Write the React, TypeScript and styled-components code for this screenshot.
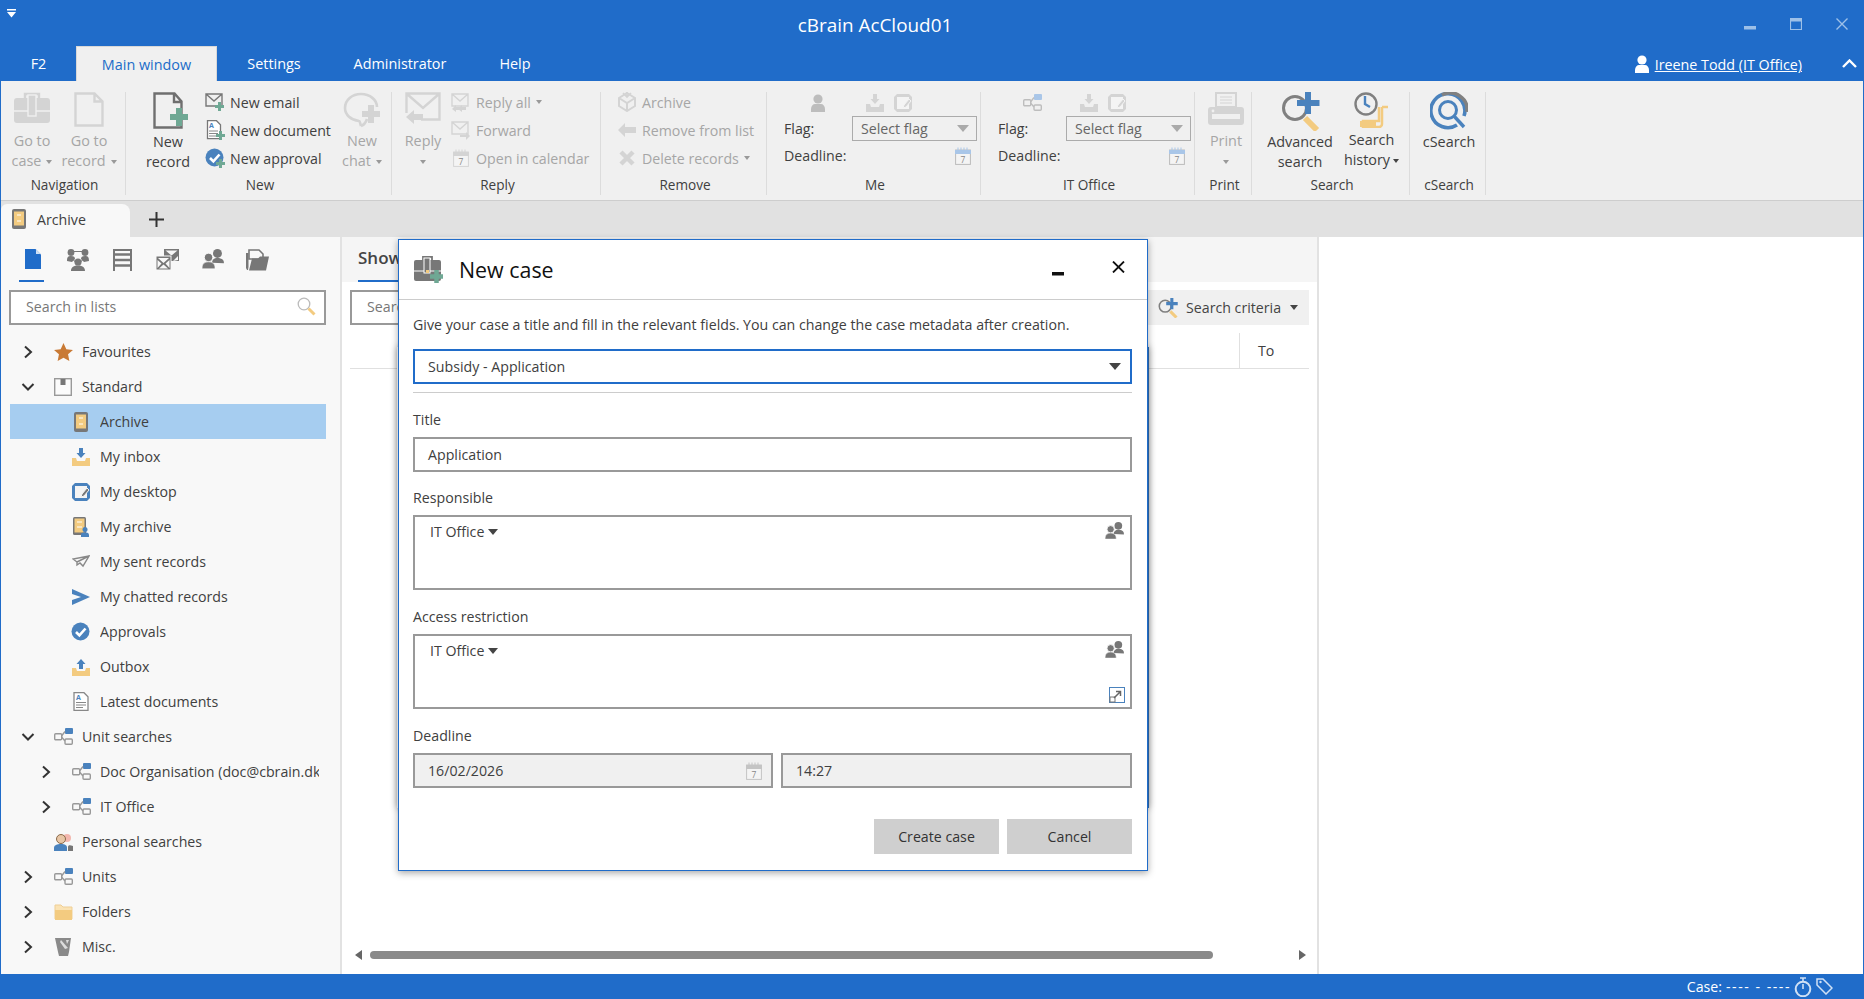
import React from 'react';
import styled, { createGlobalStyle } from 'styled-components';

const BLUE = '#206cc9';
const ICON_BLUE = '#4a82bd';
const YELLOW = '#f3cb80';
const DIS = '#d4d4d4';
const TEXT = '#404040';
const DIS_TEXT = '#a6a6a6';
const GREEN = '#6fa894';

const Global = createGlobalStyle`
  html, body { margin: 0; padding: 0; width: 1864px; height: 999px; overflow: hidden; background: #fff; }
  body { font-family: "Open Sans", "Noto Sans", sans-serif; font-size: 14.2px; color: ${TEXT}; }
  #root { width: 1864px; height: 999px; }
  * { box-sizing: border-box; }
  svg { display: block; flex: none; }
`;

const Win = styled.div`
  position: relative; width: 1864px; height: 999px; display: flex; flex-direction: column;
  border-left: 1px solid ${BLUE}; border-right: 1px solid ${BLUE}; overflow: hidden;
`;
const TitleBar = styled.div`
  height: 46px; background: ${BLUE}; display: grid; grid-template-columns: 1fr auto 1fr; align-items: center; color: #fff;
`;
const QuickAccess = styled.div`padding: 0 0 20px 6px;`;
const AppTitle = styled.div`font-size: 18.9px; padding-top: 4px; transform: translateX(-57px);`;
const WinControls = styled.div`display: flex; justify-content: flex-end; align-items: flex-start; gap: 34px; padding: 18px 15px 0 0; height: 100%;`;
const MenuBar = styled.div`height: 35px; background: ${BLUE}; display: flex; align-items: stretch;`;
const MenuTab = styled.div<{ $w: number; $active?: boolean }>`
  width: ${p => p.$w}px; display: flex; align-items: center; justify-content: center; font-size: 14.4px;
  color: ${p => (p.$active ? BLUE : '#fff')};
  background: ${p => (p.$active ? '#f0f0f0' : 'transparent')};
  ${p => p.$active && 'border: 1px solid #d8d8d8; border-bottom: none;'}
`;
const UserArea = styled.div`margin-left: auto; display: flex; align-items: center; color: #fff; font-size: 14.3px;`;
const UserName = styled.span`text-decoration: underline; margin-left: 6px; padding-top: 2px;`;
const Collapse = styled.div`margin: 0 6px 0 40px;`;

const Ribbon = styled.div`
  height: 120px; background: #f0f0f0; border-bottom: 1px solid #cdcdcd; display: flex; padding: 11px 0 5px;
`;
const Group = styled.div<{ $w: number }>`
  width: ${p => p.$w}px; border-right: 1px solid #dcdcdc; display: flex; flex-direction: column;
`;
const GroupBody = styled.div<{ $pad?: number }>`
  flex: 1; display: flex; align-items: flex-start; padding-left: ${p => p.$pad ?? 0}px; min-height: 0;
`;
const GroupLabel = styled.div`height: 20px; line-height: 20px; text-align: center; padding-left: 3px; color: ${TEXT}; font-size: 13.6px; flex: none; margin-top: -2px;`;
const LargeBtn = styled.div<{ $w: number; $off?: boolean; $push?: boolean }>`
  width: ${p => p.$w}px; display: flex; flex-direction: column; align-items: center;
  color: ${p => (p.$off ? DIS_TEXT : TEXT)}; line-height: 20px; font-size: 14.4px; text-align: center;
  ${p => p.$push && 'margin-left: auto;'}
`;
const LargeIcon = styled.div<{ $h?: number; $ox?: number }>`
  height: ${p => p.$h ?? 40}px; padding-left: ${p => p.$ox ?? 0}px; display: flex; align-items: flex-start; justify-content: center;
`;
const Caret = styled.span<{ $off?: boolean; $m?: number }>`
  display: inline-block; width: 0; height: 0; border: 3px solid transparent; border-bottom: none; border-top: 4px solid ${p => (p.$off ? '#999' : '#444')};
  margin-left: ${p => p.$m ?? 5}px; vertical-align: middle;
`;
const SmallCol = styled.div<{ $ml?: number }>`display: flex; flex-direction: column; margin-top: -4px; margin-left: ${p => p.$ml ?? 0}px;`;
const SmallBtn = styled.div<{ $off?: boolean }>`
  height: 28px; display: flex; align-items: center; white-space: nowrap; color: ${p => (p.$off ? DIS_TEXT : TEXT)}; font-size: 14.2px;
`;
const SmallIcon = styled.div<{ $w?: number }>`width: ${p => p.$w ?? 20}px; margin-right: 5px; display: flex; justify-content: center;`;
const FlagGrid = styled.div`
  display: grid; grid-template-columns: 68px 125px; grid-template-rows: 24px 25px 29px; padding-left: 17px; align-items: center; font-size: 14.2px;
`;
const CenterCell = styled.div`display: flex; justify-content: center; align-self: start; padding-top: 2px;`;
const IconPair = styled.div`display: flex; gap: 10px; padding-left: 14px; align-self: start; padding-top: 2px;`;
const FlagSelect = styled.div`
  height: 25px; border: 1px solid #ababab; display: flex; align-items: center; justify-content: space-between; padding: 0 7px 0 8px; color: #666;
`;
const DownTri = styled.span<{ $c?: string; $w?: number; $h?: number }>`
  display: inline-block; width: 0; height: 0; border-left: ${p => p.$w ?? 6}px solid transparent; border-right: ${p => p.$w ?? 6}px solid transparent;
  border-top: ${p => p.$h ?? 7}px solid ${p => p.$c ?? '#444'};
`;
const CalCell = styled.div`display: flex; justify-content: flex-end; padding-right: 6px;`;

const TabStrip = styled.div`height: 36px; background: #e1e1e1; display: flex; align-items: flex-end; position: relative;`;
const DocTab = styled.div`
  width: 129px; height: 33px; background: #f8f8f8; border-radius: 6px 8px 0 0; display: flex; align-items: center; padding: 0 0 3px 11px; gap: 11px;
`;
const AddTab = styled.div`margin: 0 0 10px 19px;`;

const Body = styled.div`flex: 1; min-height: 0; display: flex;`;
const Sidebar = styled.div`width: 341px; background: #f8f8f8; border-right: 2px solid #e2e2e2; display: flex; flex-direction: column; flex: none;`;
const NavRow = styled.div`height: 45px; display: flex; padding-left: 9px; flex: none;`;
const NavCell = styled.div<{ $active?: boolean }>`
  width: 45px; display: flex; align-items: flex-start; justify-content: center; padding-top: 12px; position: relative;
  ${p => p.$active && `&::after { content: ''; position: absolute; left: 9px; width: 25px; bottom: 0; height: 2px; background: ${BLUE}; }`}
`;
const SearchBox = styled.div`
  margin: 8px 0 0 8px; width: 317px; height: 35px; border: 2px solid #999; background: #fff; display: flex; align-items: center; justify-content: space-between;
  padding: 0 8px 2px 15px; color: #777; flex: none;
`;
const Tree = styled.div`margin-top: 9px; display: flex; flex-direction: column;`;
const Row = styled.div<{ $lvl: number; $sel?: boolean }>`
  height: 35px; margin-left: 9px; width: 316px; display: flex; align-items: center; padding-left: ${p => p.$lvl * 18}px; padding-right: 7px;
  background: ${p => (p.$sel ? '#a6cdf0' : 'transparent')}; color: ${TEXT};
`;
const Chev = styled.div`width: 36px; display: flex; justify-content: center; flex: none;`;
const RowIcon = styled.div`width: 20px; margin-left: 7px; margin-right: 9px; display: flex; justify-content: center; flex: none;`;
const RowText = styled.div`white-space: nowrap; overflow: hidden; flex: 1; min-width: 0;`;

const Main = styled.div`width: 977px; border-right: 2px solid #e2e2e2; display: flex; flex-direction: column; flex: none; background: #fff;`;
const MainHead = styled.div`height: 45px; background: #f5f5f5; padding-left: 16px; flex: none;`;
const ShowTab = styled.div`display: inline-block; height: 45px; line-height: 42px; border-bottom: 2px solid ${BLUE}; font-size: 17px; font-weight: 600; color: #444; width: 240px;`;
const ToolRow = styled.div`display: flex; margin: 8px 8px 0 8px; height: 35px; gap: 40px; flex: none;`;
const MainSearch = styled.div`flex: 1; border: 2px solid #999; padding: 0 15px 2px; display: flex; align-items: center; color: #777;`;
const CriteriaBtn = styled.div`width: 180px; background: #f0f0f0; display: flex; align-items: center; padding-left: 29px; white-space: nowrap; color: #444;`;
const CriteriaText = styled.span`margin: 0 9px 0 8px;`;
const TableHead = styled.div`margin: 8px 8px 0 8px; height: 36px; border-bottom: 1px solid #e0e0e0; display: flex; justify-content: flex-end; flex: none;`;
const HeadCell = styled.div`width: 70px; border-left: 1px solid #e0e0e0; padding-left: 18px; line-height: 36px;`;
const MainFill = styled.div`flex: 1;`;
const HScroll = styled.div`height: 19px; margin-bottom: 10px; display: flex; align-items: center; padding-left: 13px; flex: none;`;
const Thumb = styled.div`width: 843px; height: 8px; border-radius: 4px; background: #8a8a8a; margin: 0 86px 0 8px;`;
const ScrollArrow = styled.span<{ $left?: boolean }>`
  width: 0; height: 0; border-top: 5px solid transparent; border-bottom: 5px solid transparent;
  ${p => (p.$left ? 'border-right: 7px solid #666;' : 'border-left: 7px solid #666;')}
`;
const RightPane = styled.div`flex: 1; background: #fff;`;
const StatusBar = styled.div`height: 25px; background: ${BLUE}; color: #fff; display: flex; align-items: center; justify-content: flex-end; padding-right: 30px; flex: none;`;
const Dashes = styled.span`letter-spacing: 1.5px; margin-left: 4px;`;
const StatusIcons = styled.div`display: flex; gap: 4px; margin-left: 3px;`;

const UnderDialog = styled.div`
  position: absolute; left: 396px; top: 347px; width: 752px; height: 461px; background: #fff; border-right: 2px solid #2f6db5;
  box-shadow: 0 0 7px rgba(0,0,0,.35);
`;
const Dialog = styled.div`
  position: absolute; left: 397px; top: 239px; width: 750px; height: 632px; background: #fff; border: 1px solid ${BLUE};
  box-shadow: 0 2px 7px rgba(0,0,0,.35); display: flex; flex-direction: column;
`;
const DlgHead = styled.div`height: 60px; border-bottom: 1px solid #ccc; display: flex; align-items: center; padding: 0 22px 0 15px; flex: none;`;
const DlgTitle = styled.div`font-size: 21.4px; color: #111; margin-left: 15px; flex: 1;`;
const DlgClose = styled.div`margin-left: 48px; margin-top: -6px;`;
const DlgBody = styled.div`padding: 15px 15px 0 14px; display: flex; flex-direction: column; flex: 1;`;
const Desc = styled.div`line-height: 20px; white-space: nowrap;`;
const TypeSelect = styled.div`
  margin-top: 14px; height: 35px; border: 2px solid ${BLUE}; display: flex; align-items: center; justify-content: space-between; padding: 0 9px 0 13px;
`;
const Rule = styled.div`margin-top: 8px; height: 1px; background: #ccc; flex: none;`;
const Field = styled.div<{ $mt?: number }>`margin-top: ${p => p.$mt ?? 16}px;`;
const Label = styled.div`line-height: 20px; margin-bottom: 7px;`;
const TextBox = styled.div`height: 35px; border: 2px solid #999; display: flex; align-items: center; padding-left: 13px;`;
const AreaBox = styled.div`height: 75px; border: 2px solid #999; padding: 5px 0 0 15px; position: relative; line-height: 20px;`;
const Pick = styled.div`display: flex; align-items: center; gap: 4px;`;
const BoxPeople = styled.div`position: absolute; top: 5px; right: 6px;`;
const BoxExpand = styled.div`position: absolute; bottom: 4px; right: 5px;`;
const DateRow = styled.div`display: flex; gap: 8px;`;
const DateBox = styled.div<{ $w?: number }>`
  ${p => (p.$w ? `width: ${p.$w}px;` : 'flex: 1;')} height: 35px; border: 2px solid #999; background: #f0f0f0; display: flex; align-items: center; justify-content: space-between; padding: 0 9px 0 13px;
`;
const DlgFoot = styled.div`display: flex; justify-content: flex-end; gap: 8px; margin-top: 31px;`;
const DlgBtn = styled.div`width: 125px; height: 35px; background: #cfcfcf; display: flex; align-items: center; justify-content: center; color: #333;`;

/* ---------- drawings ---------- */
const Plus = ({ x, y, s, t, c = GREEN }: { x: number; y: number; s: number; t: number; c?: string }) => (
  <path fill={c} d={`M${x + (s - t) / 2} ${y}h${t}v${(s - t) / 2}h${(s - t) / 2}v${t}h${-(s - t) / 2}v${(s - t) / 2}h${-t}v${-(s - t) / 2}h${-(s - t) / 2}v${-t}h${(s - t) / 2}z`} />
);
const Briefcase = ({ c }: { c: string }) => (
  <svg width="36" height="31" viewBox="0 0 36 31">
    <path d="M11 7V2h14v5" fill="none" stroke={c} strokeWidth="2.4" />
    <rect x="0" y="6" width="36" height="25" rx="3" fill={c} />
    <path d="M0 19h36" stroke="#f0f0f0" strokeWidth="1.5" />
    <rect x="14" y="3" width="8" height="21" fill={c} stroke="#f0f0f0" strokeWidth="1.4" />
  </svg>
);
const PageIcon = ({ c }: { c: string }) => (
  <svg width="30" height="35" viewBox="0 0 30 35">
    <path d="M1.5 1.5h19l8 8v24h-27z M20.5 1.5v8h8" fill="none" stroke={c} strokeWidth="2.4" />
  </svg>
);
const NewRecordIcon = () => (
  <svg width="36" height="38" viewBox="0 0 36 38">
    <path d="M1.5 1.5h20l7 8v26h-27z M21 2v8h7" fill="#f0f0f0" stroke="#6f6f6f" strokeWidth="2.4" />
    <Plus x={17} y={16} s={18} t={6} />
  </svg>
);
const ChatIcon = () => (
  <svg width="38" height="38" viewBox="0 0 38 38">
    <path d="M18 34c-1-3-1-5-2-5C8 28 2 23 2 16 2 8 9 2 18 2s16 6 16 13" fill="none" stroke={DIS} strokeWidth="2.6" />
    <path d="M24 27c-1 3-3 6-6 7" fill="none" stroke={DIS} strokeWidth="2.6" />
    <Plus x={19} y={13} s={18} t={6} c={DIS} />
  </svg>
);
const ReplyIcon = () => (
  <svg width="36" height="34" viewBox="0 0 36 34">
    <path d="M1.5 21V1.5h33v26H16 M2 2l16 14L34 2" fill="none" stroke={DIS} strokeWidth="2.4" />
    <path d="M1 25l8-7v4h9v6H9v4z" fill={DIS} />
  </svg>
);
const Mail = ({ c, plus, arrow, dbl }: { c: string; plus?: boolean; arrow?: boolean; dbl?: boolean }) => (
  <svg width="20" height="19" viewBox="0 0 20 19">
    <path d="M1 1h16v12H1z M1 1l8 7 8-7" fill="none" stroke={c} strokeWidth="1.4" />
    {plus && <Plus x={10} y={9} s={9} t={3} />}
    {arrow && <path d="M9 14h6v-3l4 4-4 4v-3H9z" fill={c} />}
    {dbl && <path d="M1 16l4-4v2h6v3H5v2z M7 16l4-4v2h4v3h-4v2z" fill={c} />}
  </svg>
);
const DocPlus = () => (
  <svg width="19" height="20" viewBox="0 0 19 20">
    <path d="M1.5.7h9l4 4v14h-13z" fill="#fff" stroke="#777" strokeWidth="1.3" />
    <text x="3" y="8" fontSize="7" fontFamily="Open Sans" fontWeight="700" fill={ICON_BLUE}>A</text>
    <path d="M3 11h9M3 13.5h9M3 16h7" stroke="#888" />
    <Plus x={10} y={11} s={9} t={3} />
  </svg>
);
const Check = ({ s, plus }: { s: number; plus?: boolean }) => (
  <svg width={s} height={s} viewBox="0 0 20 20">
    <circle cx="9.5" cy="9.5" r="9" fill={ICON_BLUE} />
    <path d="M5 10l3.4 3.4L14.5 6.5" fill="none" stroke="#fff" strokeWidth="2.6" />
    {plus && <Plus x={11} y={11} s={9} t={3} />}
  </svg>
);
const Calendar = ({ c = '#c4c4c4', top = '#c4c4c4', w = 16, h = 18 }: { c?: string; top?: string; w?: number; h?: number }) => (
  <svg width={w} height={h} viewBox="0 0 16 18">
    <rect x=".6" y="3" width="14.8" height="14.4" fill="#f4f4f4" stroke={c} />
    <rect x="0" y="3" width="16" height="4" fill={top} />
    <path d="M3 .5v3M6 .5v3M9 .5v3M12 .5v3" stroke={top} />
    <text x="8" y="15.5" textAnchor="middle" fontSize="8.5" fontFamily="Open Sans" fill="#888">7</text>
  </svg>
);
const ArchiveBox = ({ c = DIS }: { c?: string }) => (
  <svg width="18" height="20" viewBox="0 0 18 20">
    <path d="M9 1l8 5v8l-8 5-8-5V6z M1 6l8 5 8-5 M9 11v8" fill="none" stroke={c} strokeWidth="2" />
    <path d="M9 0v5M5 1l4 4 4-4" fill="none" stroke={c} strokeWidth="1.6" />
  </svg>
);
const BackArrow = () => (
  <svg width="18" height="14" viewBox="0 0 18 14"><path d="M0 7l7-7v4h11v6H7v4z" fill={DIS} /></svg>
);
const XIcon = () => (
  <svg width="16" height="16" viewBox="0 0 16 16"><path d="M2 2l12 12M14 2L2 14" stroke={DIS} strokeWidth="4.4" /></svg>
);
const Person = ({ c }: { c: string }) => (
  <svg width="14" height="18" viewBox="0 0 14 18">
    <circle cx="7" cy="5" r="4.6" fill={c} />
    <path d="M0 18v-3c0-3 2-5 4-5h6c2 0 4 2 4 5v3z" fill={c} />
  </svg>
);
const Inbox = ({ c, arrow, up }: { c: string; arrow: string; up?: boolean }) => (
  <svg width="18" height="18" viewBox="0 0 18 18">
    <path d="M0 10h4l1 3h8l1-3h4v8H0z" fill={c} />
    <path d={up ? 'M9 1l4.5 5H11v5H7V6H4.5z' : 'M7 0h4v5h2.5L9 10 4.5 5H7z'} fill={arrow} />
  </svg>
);
const Desktop = ({ c, pen }: { c: string; pen: string }) => (
  <svg width="18" height="18" viewBox="0 0 18 18">
    <path d="M3 0h12l3 3v12l-3 3H3l-3-3V3z" fill={c} />
    <rect x="3" y="3" width="12" height="12" fill="#f4f4f4" />
    <path d="M9 14l1-3 5-6 2 2-5 6z" fill={pen} stroke="#f4f4f4" />
  </svg>
);
const UnitIcon = ({ c = '#999', a = ICON_BLUE }: { c?: string; a?: string }) => (
  <svg width="19" height="17" viewBox="0 0 19 17">
    <rect x=".7" y="5.7" width="7" height="6" rx="1" fill="none" stroke={c} strokeWidth="1.4" />
    <rect x="11" y="11" width="7.3" height="5.3" rx="1" fill="none" stroke={c} strokeWidth="1.4" />
    <rect x="11" y="0" width="8" height="6" rx="1" fill={a} />
    <path d="M7.5 8L11 3.5M7.5 9l3.5 4" stroke={c} strokeWidth="1.4" />
  </svg>
);
const Printer = () => (
  <svg width="36" height="33" viewBox="0 0 36 33">
    <path d="M8 1h20v14H8z" fill="#f0f0f0" stroke={DIS} strokeWidth="2" />
    <path d="M12 5h12M12 8h12M12 11h12" stroke={DIS} />
    <path d="M3 15h30a3 3 0 0 1 3 3v12a3 3 0 0 1-3 3H3a3 3 0 0 1-3-3V18a3 3 0 0 1 3-3z" fill={DIS} />
    <rect x="4" y="22" width="28" height="5" fill="#f0f0f0" />
    <circle cx="5" cy="19" r="1.4" fill="#f0f0f0" />
  </svg>
);
const Loupe = ({ s = 39 }: { s?: number }) => (
  <svg width={s} height={s} viewBox="0 0 39 39">
    <circle cx="14" cy="16" r="11.5" fill="none" stroke="#808080" strokeWidth="3" />
    <path d="M24 26l12 12" stroke={YELLOW} strokeWidth="6" />
    <path d="M24 0h6v8h8.5v6H30v8h-6v-8h-8V8h8z" fill={ICON_BLUE} />
  </svg>
);
const HistoryIcon = () => (
  <svg width="36" height="36" viewBox="0 0 36 36">
    <path d="M28 15h6M28 15v17a3 3 0 0 1-3 3H9v-6h16V15" fill="none" stroke={YELLOW} strokeWidth="2.5" />
    <rect x="6" y="29" width="16" height="6" fill={YELLOW} />
    <circle cx="12" cy="12" r="10.5" fill="#f0f0f0" stroke="#808080" strokeWidth="2.4" />
    <path d="M11 4v8l5 3" fill="none" stroke={ICON_BLUE} strokeWidth="2.4" />
  </svg>
);
const CSearchIcon = () => (
  <svg width="38" height="38" viewBox="0 0 38 38">
    <path d="M27 33A17 17 0 1 1 34 24" fill="none" stroke={ICON_BLUE} strokeWidth="3.6" />
    <path d="M12 3a17 17 0 0 1 25 17" fill="none" stroke="#808080" strokeWidth="3.6" />
    <circle cx="18" cy="18" r="8.5" fill="none" stroke={ICON_BLUE} strokeWidth="3" />
    <path d="M24 24l10 11" stroke={ICON_BLUE} strokeWidth="3.4" />
  </svg>
);
const CabinetTab = () => (
  <svg width="14" height="20" viewBox="0 0 14 20">
    <rect x="0" y="0" width="14" height="20" rx="2" fill="#777" />
    <rect x="2" y="2.5" width="10" height="14" fill={YELLOW} />
    <path d="M5 6h4M5 12h4" stroke="#fff" />
  </svg>
);
const Chevron = ({ down }: { down?: boolean }) => (
  <svg width="14" height="14" viewBox="0 0 14 14">
    <path d={down ? 'M1.5 4L7 9.5 12.5 4' : 'M4 1.5L10 7l-6 5.5'} fill="none" stroke="#333" strokeWidth="2" />
  </svg>
);
const Star = () => (
  <svg width="19" height="18" viewBox="0 0 20 19">
    <path d="M10 0l3 6.5 7 .8-5.2 4.7 1.4 7L10 15.5 3.800 19l1.400-7L0 7.300l7-.8z" fill="#c97a35" />
  </svg>
);
const StandardIcon = () => (
  <svg width="18" height="18" viewBox="0 0 18 18">
    <rect x=".7" y=".7" width="16.6" height="16.6" fill="#fbfbfb" stroke="#999" strokeWidth="1.4" />
    <rect x="6.5" y="1" width="5" height="6" fill="#777" />
  </svg>
);
const MyArchive = () => (
  <svg width="16" height="20" viewBox="0 0 16 20">
    <rect x="0" y="0" width="13" height="18" rx="1.5" fill="#777" />
    <rect x="1.5" y="1.5" width="10" height="14" fill={YELLOW} />
    <path d="M4 5h5M4 10h5" stroke="#fff" />
    <circle cx="12" cy="12.5" r="2.5" fill={ICON_BLUE} />
    <path d="M8 20v-2c0-2 1.500-2.500 4-2.500s4 .5 4 2.500v2z" fill={ICON_BLUE} />
  </svg>
);
const SentIcon = () => (
  <svg width="18" height="13" viewBox="0 0 18 13">
    <path d="M17 1L1 4l4 3 0 3 3-2 3 3z M17 1L5 7" fill="none" stroke="#888" strokeWidth="1.4" />
  </svg>
);
const ChatSend = () => (
  <svg width="18" height="16" viewBox="0 0 18 16"><path d="M0 0l18 8L0 16v-5l9-3-9-3z" fill={ICON_BLUE} /></svg>
);
const LatestDoc = () => (
  <svg width="16" height="19" viewBox="0 0 16 19">
    <path d="M1 .7h10l4 4v13.6H1z" fill="#fff" stroke="#888" strokeWidth="1.3" />
    <text x="3" y="8" fontSize="7" fontFamily="Open Sans" fontWeight="700" fill={ICON_BLUE}>A</text>
    <path d="M3 10.5h10M3 13h10M3 15.5h7" stroke="#888" />
  </svg>
);
const PersonalIcon = () => (
  <svg width="19" height="18" viewBox="0 0 19 18">
    <circle cx="13" cy="5" r="4" fill="#f3b7ae" />
    <circle cx="7" cy="6" r="4.5" fill="#e8c6a6" stroke="#8a6a4a" />
    <path d="M0 18v-3c0-3 3-4 7-4s6 1 6 4v3z" fill={ICON_BLUE} />
    <path d="M14 18v-4c0-2 2-2 5-1v5z" fill="#777" />
  </svg>
);
const FolderIcon = () => (
  <svg width="19" height="18" viewBox="0 0 19 18">
    <path d="M1 16V2h6l2 2h9v12z" fill="#fbe3b4" stroke="#efcf95" />
    <path d="M1 7h17v10H1z" fill={YELLOW} />
  </svg>
);
const MiscIcon = () => (
  <svg width="18" height="18" viewBox="0 0 18 18">
    <path d="M1 0h16l-2 14-1 4H5l-1-4z" fill="#8a8a8a" />
    <path d="M7 2l7 8-3 1-5-7zM12 2l3 0-2 4z" fill="#ddd" />
  </svg>
);
const MagSmall = () => (
  <svg width="19" height="19" viewBox="0 0 19 19">
    <circle cx="7" cy="7" r="5.8" fill="none" stroke="#bbb" strokeWidth="1.3" />
    <path d="M11.5 11.5L17.5 17.5" stroke={YELLOW} strokeWidth="3" />
  </svg>
);
const NavDoc = () => (
  <svg width="16" height="20" viewBox="0 0 16 20"><path d="M0 0h10.500L16 5.500V20H0z" fill={BLUE} /><path d="M11 .5v4.500h4.500" fill="#cfe0f5" /></svg>
);
const NavNet = () => (
  <svg width="22" height="22" viewBox="0 0 22 22">
    <g fill="#777">
      <circle cx="4" cy="3.5" r="3.4" /><circle cx="18" cy="3.5" r="3.4" /><circle cx="11" cy="13" r="3.6" />
      <path d="M0 12c0-4 1-5 4-5s4 1 4 3l-3 3zM22 12c0-4-1-5-4-5s-4 1-4 3l3 3zM4 22c0-4 3-5.500 7-5.500s7 1.500 7 5.500z" />
    </g>
    <path d="M5 2.5h12M4 8l6 7M18 8l-6 7" stroke="#777" fill="none" />
  </svg>
);
const NavCabinet = () => (
  <svg width="19" height="22" viewBox="0 0 19 22">
    <path d="M1 22V1h17v21" fill="none" stroke="#777" strokeWidth="2" />
    <path d="M1 5.500h17M1 11h17M1 16.500h17" stroke="#777" strokeWidth="2.5" />
  </svg>
);
const NavMail = () => (
  <svg width="23" height="21" viewBox="0 0 23 21">
    <path d="M8 0h15v12H8z" fill="#777" /><path d="M9.500 1.500l6 5 6-5z" fill="#f8f8f8" /><path d="M17 12l5-5v4z" fill="#f8f8f8" />
    <path d="M0 7h15v14H0z" fill="#777" stroke="#f8f8f8" />
    <path d="M2 9l5.500 5 5.500-5zM1.500 11l4 3.500-4 4.500zM13.500 11l-4 3.500 4 4.500zM3 19.500l4.500-4 4.500 4z" fill="#f8f8f8" />
  </svg>
);
const NavPeople = ({ s = 22, c = '#777', bg = '#f8f8f8' }: { s?: number; c?: string; bg?: string }) => (
  <svg width={s} height={s * 0.9} viewBox="0 0 22 20">
    <g fill={c}>
      <circle cx="15.5" cy="4.5" r="4.5" /><path d="M10 14c0-3 2-5 5.500-5s6.500 1.500 6.500 4.500v1z" />
      <circle cx="6.5" cy="8.5" r="4.3" stroke={bg} /><path d="M0 20v-1c0-4 2.500-6 6.500-6s6.500 2 6.500 6v1z" stroke={bg} strokeWidth=".6" />
    </g>
  </svg>
);
const NavFolder = () => (
  <svg width="23" height="22" viewBox="0 0 23 22">
    <path d="M3 1h10l4 4v5H3z" fill="#f8f8f8" stroke="#777" strokeWidth="1.6" />
    <path d="M0 4h2.500v14L2 21H1l-1-2z" fill="#777" />
    <path d="M3 21.500l3-12h6l2-2h9l-3 14z" fill="#777" />
  </svg>
);
const CaseNew = () => (
  <svg width="30" height="28" viewBox="0 0 30 28">
    <path d="M9 5V1h9v4" fill="none" stroke="#777" strokeWidth="1.8" />
    <rect x="0" y="4" width="27" height="21" rx="2" fill="#777" />
    <path d="M0 15h27" stroke="#fff" /><rect x="10" y="2" width="6" height="15" fill="#777" stroke="#fff" />
    <rect x="12" y="14" width="3" height="3" fill={YELLOW} />
    <Plus x={16} y={14} s={13} t={4.5} />
  </svg>
);
const ExpandIcon = () => (
  <svg width="16" height="16" viewBox="0 0 16 16">
    <rect x=".5" y=".5" width="15" height="15" fill="#fff" stroke={ICON_BLUE} />
    <rect x="1" y="10" width="5" height="5" fill="#fff" stroke="#777" />
    <path d="M5 11l6-6M7 4.500h4.500V9" fill="none" stroke="#666" strokeWidth="1.5" />
  </svg>
);

const rows: { lvl: number; t: string; i: React.ReactNode; c?: 'r' | 'd'; sel?: boolean }[] = [
  { lvl: 0, t: 'Favourites', i: <Star />, c: 'r' },
  { lvl: 0, t: 'Standard', i: <StandardIcon />, c: 'd' },
  { lvl: 1, t: 'Archive', i: <CabinetTab />, sel: true },
  { lvl: 1, t: 'My inbox', i: <Inbox c={YELLOW} arrow={ICON_BLUE} /> },
  { lvl: 1, t: 'My desktop', i: <Desktop c={ICON_BLUE} pen="#777" /> },
  { lvl: 1, t: 'My archive', i: <MyArchive /> },
  { lvl: 1, t: 'My sent records', i: <SentIcon /> },
  { lvl: 1, t: 'My chatted records', i: <ChatSend /> },
  { lvl: 1, t: 'Approvals', i: <Check s={20} /> },
  { lvl: 1, t: 'Outbox', i: <Inbox c={YELLOW} arrow={ICON_BLUE} up /> },
  { lvl: 1, t: 'Latest documents', i: <LatestDoc /> },
  { lvl: 0, t: 'Unit searches', i: <UnitIcon />, c: 'd' },
  { lvl: 1, t: 'Doc Organisation (doc@cbrain.dk)', i: <UnitIcon />, c: 'r' },
  { lvl: 1, t: 'IT Office', i: <UnitIcon />, c: 'r' },
  { lvl: 0, t: 'Personal searches', i: <PersonalIcon /> },
  { lvl: 0, t: 'Units', i: <UnitIcon />, c: 'r' },
  { lvl: 0, t: 'Folders', i: <FolderIcon />, c: 'r' },
  { lvl: 0, t: 'Misc.', i: <MiscIcon />, c: 'r' },
];

const FlagGroup = ({ w, title, top }: { w: number; title: string; top: React.ReactNode }) => (
  <Group $w={w}>
    <GroupBody>
      <FlagGrid>
        <CenterCell>{top}</CenterCell>
        <IconPair>
          <Inbox c={DIS} arrow={DIS} />
          <Desktop c={DIS} pen={DIS} />
        </IconPair>
        <span>Flag:</span>
        <FlagSelect>Select flag<DownTri $c="#aaa" /></FlagSelect>
        <span>Deadline:</span>
        <CalCell><Calendar c="#bbb" top="#a9c6e8" /></CalCell>
      </FlagGrid>
    </GroupBody>
    <GroupLabel>{title}</GroupLabel>
  </Group>
);

export default function App() {
  return (
    <Win>
      <Global />
      <TitleBar>
        <QuickAccess>
          <svg width="9" height="9" viewBox="0 0 9 9"><path d="M0 0h9v1.500H0zM0 3h9L4.500 8.500z" fill="#fff" /></svg>
        </QuickAccess>
        <AppTitle>cBrain AcCloud01</AppTitle>
        <WinControls>
          <svg width="12" height="12" viewBox="0 0 12 12"><path d="M0 8h12v3.500H0z" fill="#9dc0e8" /></svg>
          <svg width="12" height="12" viewBox="0 0 12 12"><path d="M.5 .5h11v11H.5zM1 3h10" fill="none" stroke="#9dc0e8" strokeWidth="1.2" /><rect width="12" height="3" fill="#9dc0e8" /></svg>
          <svg width="12" height="12" viewBox="0 0 12 12"><path d="M.5 .5l11 11M11.500 .5l-11 11" stroke="#9dc0e8" strokeWidth="1.4" /></svg>
        </WinControls>
      </TitleBar>
      <MenuBar>
        <MenuTab $w={75}>F2</MenuTab>
        <MenuTab $w={141} $active>Main window</MenuTab>
        <MenuTab $w={114}>Settings</MenuTab>
        <MenuTab $w={138}>Administrator</MenuTab>
        <MenuTab $w={92}>Help</MenuTab>
        <UserArea>
          <Person c="#fff" />
          <UserName>Ireene Todd (IT Office)</UserName>
          <Collapse>
            <svg width="15" height="10" viewBox="0 0 15 10"><path d="M1 8l6.500-6.500L14 8" fill="none" stroke="#fff" strokeWidth="2.4" /></svg>
          </Collapse>
        </UserArea>
      </MenuBar>
      <Ribbon>
        <Group $w={125}>
          <GroupBody $pad={3}>
            <LargeBtn $w={56} $off><LargeIcon $h={39}><Briefcase c={DIS} /></LargeIcon>Go to<span>case<Caret $off /></span></LargeBtn>
            <LargeBtn $w={58} $off><LargeIcon $h={39}><PageIcon c={DIS} /></LargeIcon>Go to<span>record<Caret $off /></span></LargeBtn>
          </GroupBody>
          <GroupLabel>Navigation</GroupLabel>
        </Group>
        <Group $w={266}>
          <GroupBody $pad={16}>
            <LargeBtn $w={52}><LargeIcon $ox={6}><NewRecordIcon /></LargeIcon>New<span>record</span></LargeBtn>
            <SmallCol $ml={11}>
              <SmallBtn><SmallIcon><Mail c="#777" plus /></SmallIcon>New email</SmallBtn>
              <SmallBtn><SmallIcon><DocPlus /></SmallIcon>New document</SmallBtn>
              <SmallBtn><SmallIcon><Check s={20} plus /></SmallIcon>New approval</SmallBtn>
            </SmallCol>
            <LargeBtn $w={58} $off $push><LargeIcon $h={39}><ChatIcon /></LargeIcon>New<span>chat<Caret $off /></span></LargeBtn>
          </GroupBody>
          <GroupLabel>New</GroupLabel>
        </Group>
        <Group $w={209}>
          <GroupBody $pad={8}>
            <LargeBtn $w={46} $off><LargeIcon $h={39}><ReplyIcon /></LargeIcon>Reply<span><Caret $off $m={0} /></span></LargeBtn>
            <SmallCol $ml={5}>
              <SmallBtn $off><SmallIcon><Mail c={DIS} dbl /></SmallIcon>Reply all<Caret $off /></SmallBtn>
              <SmallBtn $off><SmallIcon><Mail c={DIS} arrow /></SmallIcon>Forward</SmallBtn>
              <SmallBtn $off><SmallIcon><Calendar c={DIS} top={DIS} /></SmallIcon>Open in calendar</SmallBtn>
            </SmallCol>
          </GroupBody>
          <GroupLabel>Reply</GroupLabel>
        </Group>
        <Group $w={166}>
          <GroupBody $pad={16}>
            <SmallCol>
              <SmallBtn $off><SmallIcon><ArchiveBox /></SmallIcon>Archive</SmallBtn>
              <SmallBtn $off><SmallIcon><BackArrow /></SmallIcon>Remove from list</SmallBtn>
              <SmallBtn $off><SmallIcon><XIcon /></SmallIcon>Delete records<Caret $off /></SmallBtn>
            </SmallCol>
          </GroupBody>
          <GroupLabel>Remove</GroupLabel>
        </Group>
        <FlagGroup w={214} title="Me" top={<Person c="#bdbdbd" />} />
        <FlagGroup w={214} title="IT Office" top={<UnitIcon c="#bdbdbd" a="#a9c6e8" />} />
        <Group $w={57}>
          <GroupBody $pad={6}>
            <LargeBtn $w={51} $off><LargeIcon $h={39}><Printer /></LargeIcon>Print<span><Caret $off $m={0} /></span></LargeBtn>
          </GroupBody>
          <GroupLabel>Print</GroupLabel>
        </Group>
        <Group $w={158}>
          <GroupBody $pad={13}>
            <LargeBtn $w={70}><LargeIcon><Loupe /></LargeIcon>Advanced<span>search</span></LargeBtn>
            <LargeBtn $w={73}><LargeIcon $h={38}><HistoryIcon /></LargeIcon>Search<span>history<Caret $m={3} /></span></LargeBtn>
          </GroupBody>
          <GroupLabel>Search</GroupLabel>
        </Group>
        <Group $w={76}>
          <GroupBody $pad={3}>
            <LargeBtn $w={73}><LargeIcon><CSearchIcon /></LargeIcon>cSearch</LargeBtn>
          </GroupBody>
          <GroupLabel>cSearch</GroupLabel>
        </Group>
      </Ribbon>
      <TabStrip>
        <DocTab><CabinetTab />Archive</DocTab>
        <AddTab>
          <svg width="15" height="15" viewBox="0 0 15 15"><path d="M7.500 0v15M0 7.500h15" stroke="#333" strokeWidth="2" /></svg>
        </AddTab>
      </TabStrip>
      <Body>
        <Sidebar>
          <NavRow>
            <NavCell $active><NavDoc /></NavCell>
            <NavCell><NavNet /></NavCell>
            <NavCell><NavCabinet /></NavCell>
            <NavCell><NavMail /></NavCell>
            <NavCell><NavPeople /></NavCell>
            <NavCell><NavFolder /></NavCell>
          </NavRow>
          <SearchBox>Search in lists<MagSmall /></SearchBox>
          <Tree>
            {rows.map(r => (
              <Row key={r.t} $lvl={r.lvl} $sel={r.sel}>
                <Chev>{r.c && <Chevron down={r.c === 'd'} />}</Chev>
                <RowIcon>{r.i}</RowIcon>
                <RowText>{r.t}</RowText>
              </Row>
            ))}
          </Tree>
        </Sidebar>
        <Main>
          <MainHead><ShowTab>Show records</ShowTab></MainHead>
          <ToolRow>
            <MainSearch>Search</MainSearch>
            <CriteriaBtn><Loupe s={20} /><CriteriaText>Search criteria</CriteriaText><DownTri $w={4.5} $h={5} /></CriteriaBtn>
          </ToolRow>
          <TableHead><HeadCell>To</HeadCell></TableHead>
          <MainFill />
          <HScroll><ScrollArrow $left /><Thumb /><ScrollArrow /></HScroll>
        </Main>
        <RightPane />
      </Body>
      <StatusBar>
        Case:<Dashes>---- - ----</Dashes>
        <StatusIcons>
          <svg width="18" height="20" viewBox="0 0 18 20">
            <path d="M6 1h6M9 1v3" stroke="#cfe0f5" strokeWidth="1.6" />
            <circle cx="9" cy="12" r="7.3" fill="none" stroke="#cfe0f5" strokeWidth="2" />
            <path d="M9 12V7" stroke="#cfe0f5" strokeWidth="1.6" />
          </svg>
          <svg width="17" height="18" viewBox="0 0 17 18">
            <path d="M1 2h6l9 9-6 6-9-9z" fill="none" stroke="#cfe0f5" strokeWidth="1.5" />
            <circle cx="4.5" cy="5" r="1.2" fill="#cfe0f5" />
          </svg>
        </StatusIcons>
      </StatusBar>
      <UnderDialog />
      <Dialog>
        <DlgHead>
          <CaseNew />
          <DlgTitle>New case</DlgTitle>
          <svg width="12" height="12" viewBox="0 0 12 12"><rect x="0" y="8" width="12" height="3.5" fill="#111" /></svg>
          <DlgClose>
            <svg width="13" height="12" viewBox="0 0 13 12"><path d="M1 .5l11 11M12 .5l-11 11" stroke="#111" strokeWidth="1.8" /></svg>
          </DlgClose>
        </DlgHead>
        <DlgBody>
          <Desc>Give your case a title and fill in the relevant fields. You can change the case metadata after creation.</Desc>
          <TypeSelect>Subsidy - Application<DownTri /></TypeSelect>
          <Rule />
          <Field $mt={17}>
            <Label>Title</Label>
            <TextBox>Application</TextBox>
          </Field>
          <Field>
            <Label>Responsible</Label>
            <AreaBox>
              <Pick>IT Office<DownTri $w={5} $h={6} /></Pick>
              <BoxPeople><NavPeople s={19} bg="#fff" /></BoxPeople>
            </AreaBox>
          </Field>
          <Field $mt={17}>
            <Label>Access restriction</Label>
            <AreaBox>
              <Pick>IT Office<DownTri $w={5} $h={6} /></Pick>
              <BoxPeople><NavPeople s={19} bg="#fff" /></BoxPeople>
              <BoxExpand><ExpandIcon /></BoxExpand>
            </AreaBox>
          </Field>
          <Field $mt={17}>
            <Label>Deadline</Label>
            <DateRow>
              <DateBox $w={360}>16/02/2026<Calendar /></DateBox>
              <DateBox>14:27</DateBox>
            </DateRow>
          </Field>
          <DlgFoot>
            <DlgBtn>Create case</DlgBtn>
            <DlgBtn>Cancel</DlgBtn>
          </DlgFoot>
        </DlgBody>
      </Dialog>
    </Win>
  );
}
